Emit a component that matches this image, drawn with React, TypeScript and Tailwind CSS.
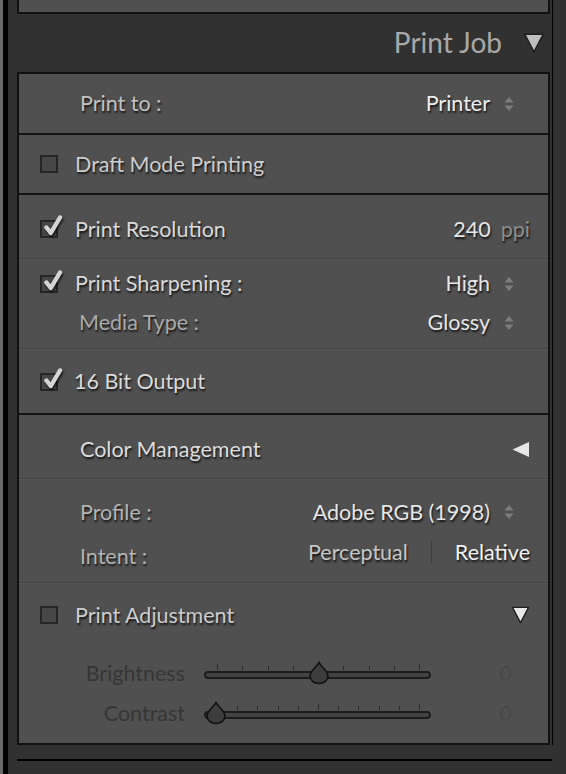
import React from "react";

const font = "font-['Lato','Open_Sans',sans-serif]";
const shadow = "[text-shadow:1px_2px_2px_rgba(0,0,0,0.75)]";

const Stepper: React.FC = () => (
  <svg width="10" height="16" viewBox="0 0 10 16" className="shrink-0">
    <polygon points="0.5,6.5 5,1 9.5,6.5" fill="#7d7d7d" />
    <polygon points="0.5,9.5 5,15 9.5,9.5" fill="#7d7d7d" />
  </svg>
);

const Check: React.FC<{ checked?: boolean }> = ({ checked }) => (
  <div className="relative w-[18px] h-[18px] shrink-0 border-2 border-[#262626] bg-[#474747]">
    {checked && (
      <svg
        width="21"
        height="23"
        viewBox="0 0 21 23"
        className="absolute left-[1px] -top-[8px] drop-shadow-[1px_2px_1px_rgba(0,0,0,0.7)]"
      >
        <path
          d="M3.5 13.5 L7.8 19 L17 3.5"
          fill="none"
          stroke="#d4d4d4"
          strokeWidth="4.4"
          strokeLinecap="round"
          strokeLinejoin="round"
        />
      </svg>
    )}
  </div>
);

const TriDown: React.FC<{ fill: string; w: number; h: number }> = ({ fill, w, h }) => (
  <svg width={w} height={h} viewBox="0 0 20 19" className="shrink-0">
    <path
      d="M1.5 1.5 L18.5 1.5 L10 17.5 Z"
      fill={fill}
      stroke="#1f1f1f"
      strokeWidth="1.4"
      strokeLinejoin="round"
    />
  </svg>
);

const TriLeft: React.FC = () => (
  <svg width="19" height="17" viewBox="0 0 19 17" className="shrink-0">
    <path d="M18 1 L18 16 L1.5 8.5 Z" fill="#e6e6e6" strokeLinejoin="round" />
  </svg>
);

const Divider: React.FC<{ dark?: boolean }> = ({ dark }) =>
  dark ? (
    <div className="h-[2px] bg-[#151515]" />
  ) : (
    <div className="h-[2px] border-t border-[#444444] border-b border-b-[#565656]" />
  );

interface SliderProps {
  label: string;
  pos: number;
  ticks: number;
}

const Slider: React.FC<SliderProps> = ({ label, pos, ticks }) => {
  const tickXs = Array.from({ length: ticks }, (_, i) => 13 + (i * 202) / (ticks - 1));
  return (
    <div className="flex items-center h-[40px]">
      <div className={`w-[166px] text-right text-[21.5px] text-[#363636] ${font}`}>{label}</div>
      <div className="relative ml-[19px] w-[227px] h-[26px]">
        <svg width="227" height="8" className="absolute left-0 top-[3px]">
          {tickXs.map((x, i) => {
            const tall = i === 0 || i === ticks - 1 || i === (ticks - 1) / 2;
            return (
              <line
                key={i}
                x1={Math.round(x) + 0.5}
                x2={Math.round(x) + 0.5}
                y1={tall ? 1 : 3}
                y2={7}
                stroke="#2c2c2c"
                strokeWidth="1"
              />
            );
          })}
        </svg>
        <div className="absolute left-0 right-0 top-[11px] h-[8px] rounded-full border-2 border-[#1c1c1c] bg-[#434343]" />
        <svg
          width="22"
          height="24"
          viewBox="0 0 22 24"
          className="absolute top-[1px]"
          style={{ left: pos - 11 }}
        >
          <path
            d="M11 1.5 C13 5.5 20 10 20 15 C20 19.5 16 22.5 11 22.5 C6 22.5 2 19.5 2 15 C2 10 9 5.5 11 1.5 Z"
            fill="#3d3d3d"
            stroke="#111"
            strokeWidth="1.6"
          />
        </svg>
      </div>
      <div className={`ml-auto pr-[36px] text-[21.5px] text-[#484848] ${font}`}>0</div>
    </div>
  );
};

export default function App() {
  return (
    <div className={`w-[566px] h-[774px] flex overflow-hidden bg-[#313131] ${font}`}>
      <div className="w-[3px] bg-[#6a6a6a]" />
      <div className="w-[5px] bg-black" />
      <div className="flex flex-col pl-[9px] w-[544px] shrink-0">
        {/* previous panel stub */}
        <div className="h-[14px] w-[533px] bg-[#505050] border-x-2 border-b-2 border-[#111]" />

        {/* header */}
        <div className="h-[58px] w-[533px] flex items-center justify-end pr-[5px] pb-[2px]">
          <span className={`text-[28px] text-[#a8a8a8] ${font}`}>Print Job</span>
          <span className="ml-[21px] mt-[2px]">
            <TriDown fill="#bdbdbd" w={22} h={22} />
          </span>
        </div>

        {/* panel */}
        <div className={`w-[533px] border-2 border-[#111] bg-[#505050] text-[21.5px] ${shadow}`}>
          <div className="h-[59px] flex items-center pl-[61px] pr-[34px]">
            <span className="text-[#c2c2c2]">Print to :</span>
            <span className="ml-auto text-[#ededed]">Printer</span>
            <span className="ml-[14px]"><Stepper /></span>
          </div>
          <Divider dark />

          <div className="h-[58px] flex items-center pl-[21px] gap-[17px]">
            <Check />
            <span className="text-[#cdcdcd]">Draft Mode Printing</span>
          </div>
          <Divider dark />

          <div className="h-[63px] flex items-center pl-[21px] pr-[18px] pt-[5px]">
            <Check checked />
            <span className="ml-[17px] text-[#d9d9d9]">Print Resolution</span>
            <span className="ml-auto text-[#e6e6e6]">240</span>
            <span className="ml-[10px] text-[#8c8c8c]">ppi</span>
          </div>
          <Divider />

          <div className="h-[88px] flex flex-col pt-[4px]">
            <div className="h-[39px] flex items-center pl-[21px] pr-[34px]">
              <Check checked />
              <span className="ml-[17px] text-[#d9d9d9]">Print Sharpening :</span>
              <span className="ml-auto text-[#e6e6e6]">High</span>
              <span className="ml-[14px]"><Stepper /></span>
            </div>
            <div className="h-[39px] flex items-center pl-[60px] pr-[34px]">
              <span className="text-[#a9a9a9]">Media Type :</span>
              <span className="ml-auto text-[#e6e6e6]">Glossy</span>
              <span className="ml-[14px]"><Stepper /></span>
            </div>
          </div>
          <Divider />

          <div className="h-[63px] flex items-center pl-[21px] gap-[16px]">
            <Check checked />
            <span className="text-[#dadada]">16 Bit Output</span>
          </div>
          <Divider dark />

          <div className="h-[63px] flex items-center pl-[61px] pr-[18px] pt-[5px]">
            <span className="text-[#dcdcdc]">Color Management</span>
            <span className="ml-auto"><TriLeft /></span>
          </div>
          <Divider />

          <div className="h-[102px] flex flex-col pt-[12px]">
            <div className="h-[40px] flex items-center pl-[61px] pr-[34px]">
              <span className="text-[#b3b3b3]">Profile :</span>
              <span className="ml-auto text-[#e6e6e6]">Adobe RGB (1998)</span>
              <span className="ml-[14px]"><Stepper /></span>
            </div>
            <div className="h-[40px] flex items-center pl-[61px] pr-[18px]">
              <span className="text-[#b3b3b3] pt-[8px]">Intent :</span>
              <span className="ml-auto text-[#c6c6c6]">Perceptual</span>
              <span className="mx-[23px] w-px h-[22px] bg-[#3e3e3e]" />
              <span className="text-[#f2f2f2]">Relative</span>
            </div>
          </div>
          <Divider />

          <div className="h-[159px] flex flex-col">
            <div className="h-[62px] flex items-center pl-[21px] pr-[18px]">
              <Check />
              <span className="ml-[17px] text-[#cdcdcd]">Print Adjustment</span>
              <span className="ml-auto"><TriDown fill="#e8e8e8" w={19} h={18} /></span>
            </div>
            <div className="mt-[7px] [text-shadow:none]">
              <Slider label="Brightness" pos={115} ticks={9} />
              <Slider label="Contrast" pos={12} ticks={11} />
            </div>
          </div>
        </div>

        <div className="h-[14px]" />
        <div className="h-[2px] w-[535px] bg-black" />
      </div>
      <div className="w-[1px] h-[745px] bg-black" />
    </div>
  );
}
